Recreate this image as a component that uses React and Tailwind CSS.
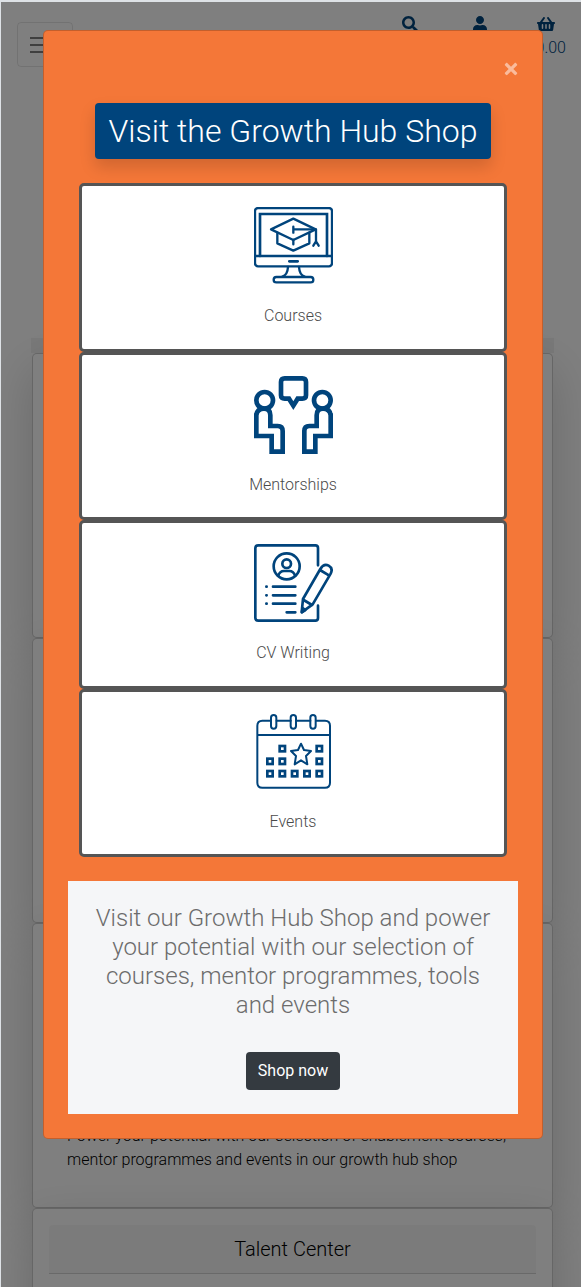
import React from "react";
import { FaSearch, FaUser, FaShoppingBasket, FaTimes } from "react-icons/fa";

const iconProps = {
  className: "h-[79px] w-[79px]",
  fill: "none",
  stroke: "#00447c",
  strokeLinejoin: "round",
  strokeLinecap: "round",
  "aria-hidden": true,
};

function CoursesIcon() {
  return (
    <svg {...iconProps} viewBox="39 36 237 237" strokeWidth="7">
      <rect x="42" y="39" width="231" height="175" rx="9" />
      <path d="M57 183V57H258V183" strokeWidth="8" strokeLinejoin="miter" />
      <path d="M42 183H273" />
      <path d="M145 199H170" strokeWidth="8" />
      <path d="M141 216C140 232 136 241 124 245M174 216C175 232 179 241 191 245" />
      <rect x="98" y="246" width="119" height="16" rx="8" />
      <path d="M157 71L90 103L157 135L224 103Z" />
      <path d="M109 113V145L157 167L205 145V113M157 135V148M157 95V113M157 103H225V139M225 139L217 152M225 139L233 152" />
    </svg>
  );
}

function MentorshipsIcon() {
  return (
    <svg
      {...iconProps}
      viewBox="39 30 237 237"
      strokeWidth="14"
      strokeLinejoin="miter"
      strokeLinecap="butt"
    >
      <path d="M131 37H184Q195 37 195 48V88Q195 98 184 98H170L157 119L144 98H131Q120 98 120 88V48Q120 37 131 37Z" />
      <circle cx="71" cy="103" r="25" />
      <path d="M46 148Q48 128 69 128Q88 128 88 148V180H110Q125 180 125 195V257H92V210H46V142" />
      <circle cx="244" cy="103" r="25" />
      <path d="M269 148Q267 128 246 128Q227 128 227 148V180H205Q190 180 190 195V257H223V210H269V142" />
    </svg>
  );
}

function CvIcon() {
  return (
    <svg {...iconProps} viewBox="39 30 237 237" strokeWidth="8">
      <path d="M231 94V42Q231 34 223 34H52Q43 34 43 42V252Q43 260 52 260H223Q231 260 231 252V215" />
      <circle cx="137" cy="97" r="39" />
      <circle cx="137" cy="89" r="13" />
      <path d="M112 125Q116 111 129 111H145Q158 111 162 125" />
      <path d="M96 158H163M96 184H163M96 209H163M137 235H163M76 158H77M76 184H77M76 209H77" />
      <path d="M182 235L186 195L238 105Q248 88 263 95Q277 103 269 119L215 211Z M237 108L265 125M188 198L213 213" />
      <path d="M183 234L185 222L193 228Z" fill="#00447c" />
    </svg>
  );
}

const daySquares = [
  [124, 143], [235, 143],
  [87, 181], [124, 181], [235, 181],
  [87, 218], [124, 218], [161, 218], [198, 218], [235, 218],
];

function EventsIcon() {
  return (
    <svg {...iconProps} viewBox="39 36 237 237" strokeWidth="6">
      <path d="M89 59H64Q49 59 49 74V245Q49 260 64 260H252Q267 260 267 245V74Q267 59 252 59H226M107 59H149M166 59H208M49 102H267" />
      <rect x="90" y="42" width="16" height="41" rx="8" />
      <rect x="149" y="42" width="16" height="41" rx="8" />
      <rect x="208" y="42" width="16" height="41" rx="8" />
      <path d="M180 128L189 147L210 150L195 165L199 190L180 178L161 190L165 165L150 150L171 147Z" />
      {daySquares.map(([x, y]) => (
        <rect
          key={x + "-" + y}
          x={x - 8}
          y={y - 8}
          width="16"
          height="16"
          strokeWidth="8"
          strokeLinejoin="miter"
        />
      ))}
    </svg>
  );
}

const tiles = [
  { label: "Courses", Icon: CoursesIcon },
  { label: "Mentorships", Icon: MentorshipsIcon },
  { label: "CV Writing", Icon: CvIcon },
  { label: "Events", Icon: EventsIcon },
];

function PageHeader() {
  return (
    <header className="flex items-start justify-between pt-5 pr-[15px] pl-4">
      <button
        type="button"
        aria-label="Menu"
        className="flex h-[45px] w-14 flex-col justify-center gap-[5px] rounded border border-black/10 px-3"
      >
        <span className="h-0.5 bg-black/50" />
        <span className="h-0.5 bg-black/50" />
        <span className="h-0.5 bg-black/50" />
      </button>
      <nav className="-mt-1.5 flex text-[#00447c]">
        <a href="#search" aria-label="Search" className="flex w-[70px] justify-center">
          <FaSearch size={16} />
        </a>
        <a href="#account" aria-label="Account" className="flex w-[70px] justify-center">
          <FaUser size={16} />
        </a>
        <a href="#basket" className="flex w-[51px] flex-col items-end gap-[3px]">
          <FaShoppingBasket size={18} className="-mt-px mr-[11px]" />
          <span className="leading-6">R0.00</span>
        </a>
      </nav>
    </header>
  );
}

function PageCards() {
  const card =
    "min-h-[285px] rounded-[5px] border border-black/20 bg-white shadow-[0_16px_48px_rgba(0,0,0,0.175)]";
  return (
    <main className="mt-[271px] pr-7 pl-[31px]">
      <div className="-mx-px h-[15px] bg-black/5" />
      <section className={card} />
      <section className={card} />
      <section className={card + " flex flex-col justify-end px-[34px] pb-[35px]"}>
        <p className="leading-6 text-black">
          Power your potential with our selection of enablement courses, mentor
          programmes and events in our growth hub shop
        </p>
      </section>
      <section className={card + " p-4"}>
        <h2 className="rounded-t border-b border-black/15 bg-black/3 py-3 text-center text-xl leading-6 text-black">
          Talent Center
        </h2>
      </section>
    </main>
  );
}

function ShopDialog() {
  return (
    <div
      role="dialog"
      aria-modal="true"
      aria-labelledby="shop-title"
      className="flex w-full max-w-[500px] flex-col rounded-[5px] border border-black/20 bg-[#f47738] p-6"
    >
      <div className="flex h-[27px] items-center justify-end">
        <button type="button" aria-label="Close" className="-mr-0.5 text-white/50">
          <FaTimes size={18} />
        </button>
      </div>
      <h1
        id="shop-title"
        className="mt-[21px] self-center rounded bg-[#00447c] px-3.5 py-2 text-center text-[32px] leading-10 text-white shadow-[0_8px_16px_rgba(0,0,0,0.15)]"
      >
        Visit the Growth Hub Shop
      </h1>
      <div className="mx-[11px] mt-6 grid min-h-[674px] auto-rows-fr">
        {tiles.map(({ label, Icon }) => (
          <a
            key={label}
            href="#shop"
            className="flex flex-col items-center rounded-[5px] border-3 border-[#555555] bg-white pt-[21px] text-[#4a4a4a]"
          >
            <Icon />
            <span className="mt-[18px] leading-6">{label}</span>
          </a>
        ))}
      </div>
      <div className="mt-6 flex flex-col items-center bg-[#f5f6f8] px-6 pt-[23px] pb-6">
        <p className="text-center text-2xl leading-[29px] text-[#6c6c6c]">
          Visit our Growth Hub Shop and power your potential with our selection
          of courses, mentor programmes, tools and events
        </p>
        <button
          type="button"
          className="mt-8 rounded bg-[#343a40] px-3 py-[7px] leading-6 font-normal text-white"
        >
          Shop now
        </button>
      </div>
    </div>
  );
}

export default function App() {
  return (
    <div className="relative h-screen overflow-hidden border-t-2 border-l border-[#dee2e6] bg-white font-['Roboto',sans-serif] text-base font-light">
      <PageHeader />
      <PageCards />
      <div className="absolute inset-0 flex items-start justify-center bg-black/50 pt-7 pl-1">
        <ShopDialog />
      </div>
    </div>
  );
}
